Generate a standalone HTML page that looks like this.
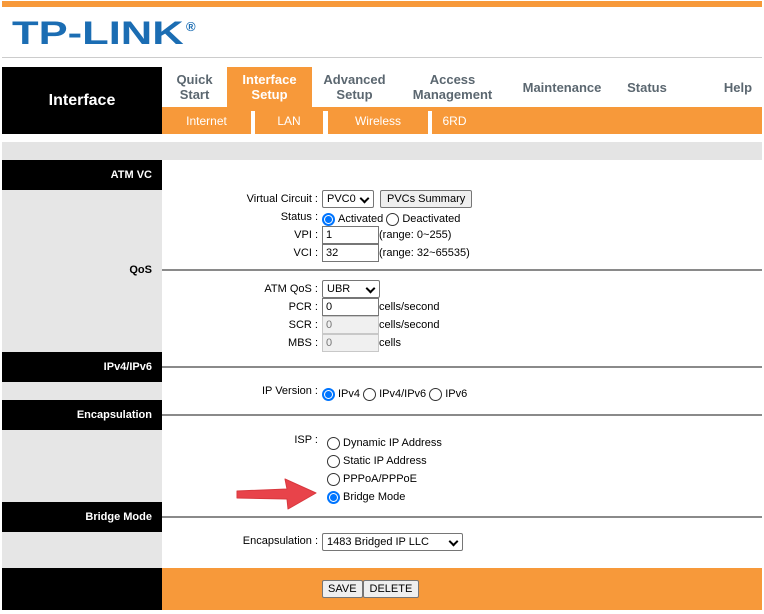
<!DOCTYPE html>
<html><head><style>
*{margin:0;padding:0;box-sizing:border-box}
body{width:764px;height:614px;background:#fff;position:relative;overflow:hidden;font-family:"Liberation Sans",Arial,sans-serif;font-size:11px;color:#000}
.a{position:absolute}
.blk{position:absolute;left:2px;width:160px;background:#000;color:#fff;font-weight:bold;font-size:11px;text-align:right;padding-right:10px}
.line{position:absolute;left:162px;right:2px;height:2px;background:#8a8a8a}
.lbl{position:absolute;right:446px;text-align:right;white-space:nowrap}
.ctl{position:absolute;left:322px;white-space:nowrap;display:flex;align-items:center}
.inp{width:57px;height:18px;border:1px solid #767676;padding-left:3px;font-size:11px;line-height:16px;background:#fff}
.inp.d{background:#f0f0f0;border-color:#c8c8c8;color:#777}
.sel{height:18px;border:1px solid #767676;border-radius:2px;padding:0 4px;font-size:11px;line-height:16px;position:relative;background:#fff}
.sel:after{content:"";position:absolute;right:5px;top:4px;width:5px;height:5px;border-right:2px solid #000;border-bottom:2px solid #000;transform:rotate(45deg)}
.r{display:inline-block;width:13px;height:13px;border:1px solid #333;border-radius:50%;margin-right:3px;background:#fff;position:relative;top:1px}
.r.on{border-color:#0075ff;border-width:2px}
.r.on:after{content:"";position:absolute;left:1px;top:1px;width:7px;height:7px;border-radius:50%;background:#0075ff}
.btn{border:1px solid #767676;background:#efefef;border-radius:2px;padding:0 6px;height:18px;line-height:16px;font-size:11px}
.nav{position:absolute;top:67px;height:40px;text-align:center;font-weight:bold;font-size:13px;color:#5b6770;line-height:15px;display:flex;align-items:center;justify-content:center}
.sub{position:absolute;top:107px;height:27px;line-height:28px;color:#fff;font-size:12px;text-align:center}
</style></head><body>
<div class="a" style="left:2px;right:2px;top:1px;height:6px;background:#f7993a"></div>
<div class="a" style="left:12px;top:15px;font-weight:bold;font-size:32px;line-height:36px;color:#1b6db3;transform:scaleX(1.36);transform-origin:left">TP-LINK</div>
<div class="a" style="left:186px;top:19px;font-size:13px;font-weight:bold;color:#1b6db3">®</div>
<div class="a" style="left:2px;right:2px;top:57px;height:1px;background:#ccc"></div>

<div class="a" style="left:2px;top:67px;width:160px;height:67px;background:#000;color:#fff;font-weight:bold;font-size:16px;line-height:67px;text-align:center">Interface</div>
<div class="a" style="left:162px;top:107px;width:600px;height:27px;background:#f7993a"></div>
<div class="a" style="left:227px;top:67px;width:85px;height:40px;background:#f7993a"></div>
<div class="nav" style="left:162px;width:65px">Quick<br>Start</div>
<div class="nav" style="left:227px;width:85px;color:#fff">Interface<br>Setup</div>
<div class="nav" style="left:312px;width:85px">Advanced<br>Setup</div>
<div class="nav" style="left:405px;width:95px">Access<br>Management</div>
<div class="nav" style="left:512px;width:100px">Maintenance</div>
<div class="nav" style="left:617px;width:60px">Status</div>
<div class="nav" style="left:712px;width:52px">Help</div>
<div class="sub" style="left:162px;width:89px">Internet</div>
<div class="a" style="left:251px;top:111px;width:4px;height:23px;background:#fff"></div>
<div class="sub" style="left:255px;width:68px">LAN</div>
<div class="a" style="left:323px;top:111px;width:5px;height:23px;background:#fff"></div>
<div class="sub" style="left:328px;width:100px">Wireless</div>
<div class="a" style="left:428px;top:111px;width:4px;height:23px;background:#fff"></div>
<div class="sub" style="left:432px;width:45px">6RD</div>

<div class="a" style="left:2px;right:2px;top:142px;height:18px;background:#e4e4e4"></div>
<div class="a" style="left:2px;top:160px;width:160px;height:408px;background:#e6e6e6"></div>

<div class="blk" style="top:160px;height:30px;line-height:30px">ATM VC</div>
<div class="a" style="left:2px;width:150px;top:264px;text-align:right;font-weight:bold">QoS</div>
<div class="line" style="top:269px"></div>
<div class="blk" style="top:352px;height:30px;line-height:30px">IPv4/IPv6</div>
<div class="line" style="top:366px"></div>
<div class="blk" style="top:400px;height:30px;line-height:30px">Encapsulation</div>
<div class="line" style="top:414px"></div>
<div class="blk" style="top:502px;height:30px;line-height:30px">Bridge Mode</div>
<div class="line" style="top:516px"></div>
<div class="a" style="left:2px;top:568px;width:160px;height:42px;background:#000"></div>
<div class="a" style="left:162px;top:568px;width:600px;height:42px;background:#f7993a"></div>

<div class="lbl" style="top:193px">Virtual Circuit :</div>
<div class="ctl" style="top:190px"><div class="sel" style="width:52px">PVC0</div><div class="btn" style="margin-left:6px">PVCs Summary</div></div>
<div class="lbl" style="top:211px">Status :</div>
<div class="ctl" style="top:212px"><span class="r on"></span>Activated&nbsp;<span class="r"></span>Deactivated</div>
<div class="lbl" style="top:229px">VPI :</div>
<div class="ctl" style="top:226px"><div class="inp">1</div>(range: 0~255)</div>
<div class="lbl" style="top:247px">VCI :</div>
<div class="ctl" style="top:244px"><div class="inp">32</div>(range: 32~65535)</div>
<div class="lbl" style="top:283px">ATM QoS :</div>
<div class="ctl" style="top:280px"><div class="sel" style="width:58px">UBR</div></div>
<div class="lbl" style="top:301px">PCR :</div>
<div class="ctl" style="top:298px"><div class="inp">0</div>cells/second</div>
<div class="lbl" style="top:319px">SCR :</div>
<div class="ctl" style="top:316px"><div class="inp d">0</div>cells/second</div>
<div class="lbl" style="top:337px">MBS :</div>
<div class="ctl" style="top:334px"><div class="inp d">0</div>cells</div>
<div class="lbl" style="top:385px">IP Version :</div>
<div class="ctl" style="top:387px"><span class="r on"></span>IPv4&nbsp;<span class="r"></span>IPv4/IPv6&nbsp;<span class="r"></span>IPv6</div>
<div class="lbl" style="top:434px">ISP :</div>
<div class="ctl" style="top:436px;left:327px"><span class="r"></span>Dynamic IP Address</div>
<div class="ctl" style="top:454px;left:327px"><span class="r"></span>Static IP Address</div>
<div class="ctl" style="top:472px;left:327px"><span class="r"></span>PPPoA/PPPoE</div>
<div class="ctl" style="top:490px;left:327px"><span class="r on"></span>Bridge Mode</div>
<div class="lbl" style="top:535px">Encapsulation :</div>
<div class="ctl" style="top:533px"><div class="sel" style="width:141px">1483 Bridged IP LLC</div></div>
<div class="ctl" style="top:580px"><div class="btn" style="padding:0 5px">SAVE</div><div class="btn" style="padding:0 6px">DELETE</div></div>

<svg class="a" style="left:232px;top:476px" width="88" height="36"><path d="M5 15 L55 13 L53 3 L84 17 L56 33 L55 23 L5 22 Z" fill="#e8434a" stroke="#d8383e" stroke-width="1" stroke-linejoin="round"/></svg>
</body></html>
